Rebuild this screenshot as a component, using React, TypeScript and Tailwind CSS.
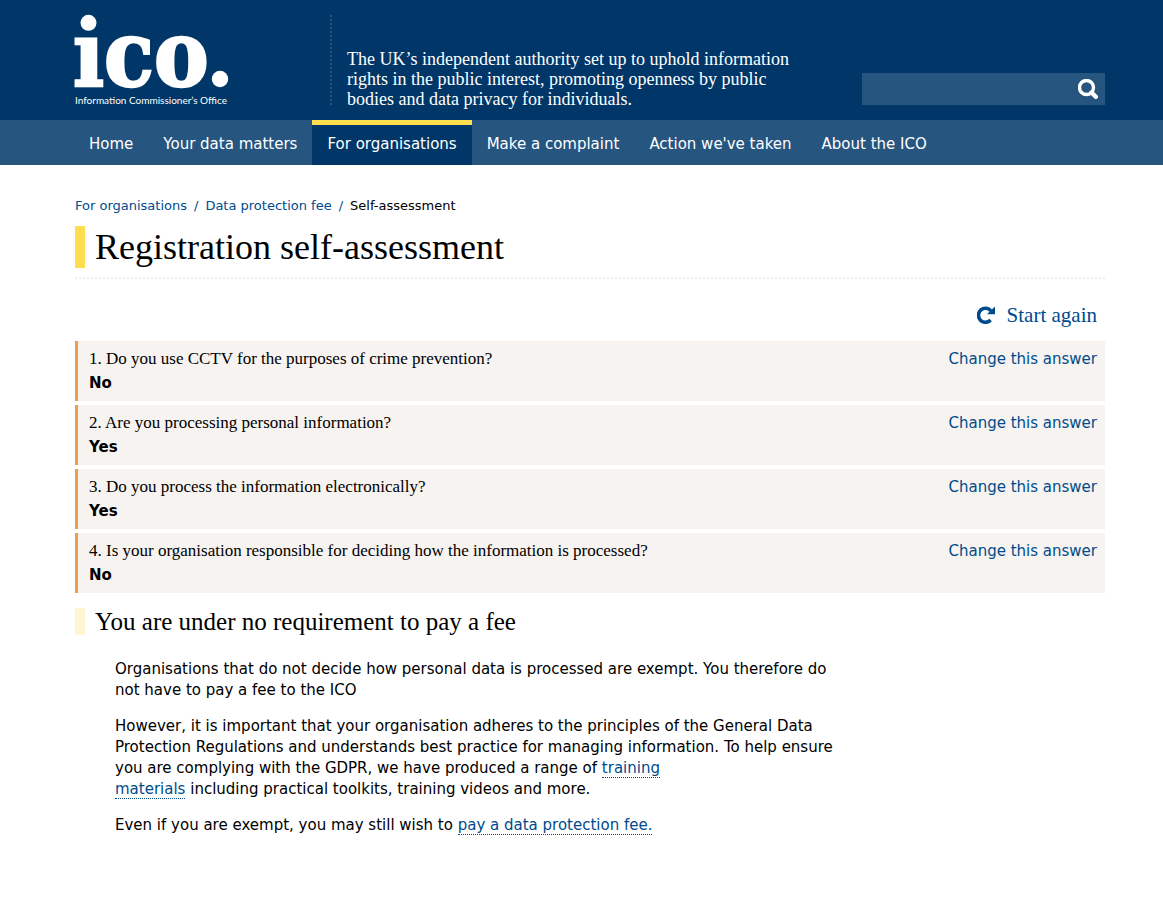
import React from "react";

const navItems = [
  "Home",
  "Your data matters",
  "For organisations",
  "Make a complaint",
  "Action we've taken",
  "About the ICO",
];

const answers = [
  {
    question: "1. Do you use CCTV for the purposes of crime prevention?",
    answer: "No",
  },
  { question: "2. Are you processing personal information?", answer: "Yes" },
  {
    question: "3. Do you process the information electronically?",
    answer: "Yes",
  },
  {
    question:
      "4. Is your organisation responsible for deciding how the information is processed?",
    answer: "No",
  },
];

const Logo = () => (
  <a href="#" className="block w-[259px] shrink-0">
    <svg width="164" height="114" viewBox="-4 0 164 114" fill="#fff">
      {/* dotless i, the round dot is drawn separately */}
      <text
        x="-2"
        y="86"
        fontFamily="'DejaVu Serif Condensed', 'DejaVu Serif', serif"
        fontWeight="bold"
        fontSize="91"
        stroke="#fff"
        strokeWidth="2.4"
      >
        ıco
      </text>
      <circle cx="13.5" cy="22.8" r="8" />
      <circle cx="145" cy="79" r="8.2" />
      <text x="0" y="104" fontFamily="Lato, sans-serif" fontSize="10">
        Information Commissioner’s Office
      </text>
    </svg>
  </a>
);

const SearchIcon = () => (
  <svg width="20" height="20" viewBox="0 0 20 20" fill="none" stroke="#fff">
    <circle cx="8.500" cy="8.500" r="7" strokeWidth="3.4" />
    <path d="M13.500 13.500l4.300 4.300" strokeWidth="4.400" strokeLinecap="round" />
  </svg>
);

const RestartIcon = () => (
  <svg width="18" height="18" viewBox="0 0 18 18" fill="none">
    <path
      d="M13.600 14A7 7 0 1 1 14 5"
      stroke="currentColor"
      strokeWidth="3.6"
    />
    <path d="M18 .5V8.300h-8z" fill="currentColor" />
  </svg>
);

const Header = () => (
  <header className="bg-[#003768] text-white">
    <div className="flex h-[120px] pl-[71px] pr-[58px]">
      <Logo />
      <p className="mt-[15px] h-[90px] max-w-[464px] border-l-2 border-dotted border-[#26557f] pl-[15px] pt-[34px] font-['Liberation_Serif',serif] text-[18px] leading-[20px]">
        The UK’s independent authority set up to uphold information rights in
        the public interest, promoting openness by public bodies and data
        privacy for individuals.
      </p>
      <form className="ml-auto mt-[73px] flex h-8 w-[243px] bg-[#26557f]">
        <input
          type="search"
          aria-label="Search"
          className="min-w-0 flex-1 px-2 outline-none"
        />
        <button type="submit" aria-label="Submit search" className="px-[7px]">
          <SearchIcon />
        </button>
      </form>
    </div>
    <nav className="bg-[#26557f] pl-[74px]">
      <ul className="flex">
        {navItems.map((item) => (
          <li key={item}>
            <a
              href="#"
              className={`block h-[45px] border-t-[5px] px-[15px] text-[15px] leading-[38px] ${
                item === "For organisations"
                  ? "border-[#ffdf4f] bg-[#003768]"
                  : "border-transparent"
              }`}
            >
              {item}
            </a>
          </li>
        ))}
      </ul>
    </nav>
  </header>
);

const App = () => {
  return (
    <div className="min-h-screen bg-white font-['DejaVu_Sans',sans-serif] text-[15px] text-black">
      <Header />
      <main className="pb-[67px] pl-[75px] pr-[58px] pt-[30px]">
        <nav className="flex gap-[7px] text-[13px] leading-[21px] text-[#004b8d]">
          <a href="#">For organisations</a>
          <span>/</span>
          <a href="#">Data protection fee</a>
          <span>/</span>
          <span className="text-black">Self-assessment</span>
        </nav>
        <div className="mt-[10px] border-b-2 border-dotted border-[#eeeeee] pb-[9px]">
          <h1 className="border-l-[10px] border-[#ffdf4f] pl-[10px] font-['Liberation_Serif',serif] text-[36px] leading-[42px]">
            Registration self-assessment
          </h1>
        </div>
        <div className="flex justify-end pb-[14px] pr-2 pt-6">
          <a
            href="#"
            className="flex items-center gap-3 font-['Liberation_Serif',serif] text-[21px] leading-6 text-[#004b8d]"
          >
            <RestartIcon />
            Start again
          </a>
        </div>
        <ol className="flex flex-col gap-1">
          {answers.map(({ question, answer }) => (
            <li
              key={question}
              className="flex min-h-[60px] justify-between border-l-[3px] border-[#ef9f4a] bg-[#f6f3f0] pl-[11px] pr-2 pt-[6px] leading-6"
            >
              <div>
                <p className="font-['Liberation_Serif',serif] text-[17px]">
                  {question}
                </p>
                <p className="font-bold">{answer}</p>
              </div>
              <a href="#" className="text-[#004b8d]">
                Change this answer
              </a>
            </li>
          ))}
        </ol>
        <h2 className="mt-[15px] border-l-[10px] border-[#fff7d3] pl-[10px] font-['Liberation_Serif',serif] text-[25px] leading-[27px]">
          You are under no requirement to pay a fee
        </h2>
        <div className="mt-6 flex max-w-[810px] flex-col gap-[15px] px-10 leading-[21px]">
          <p>
            Organisations that do not decide how personal data is processed are
            exempt. You therefore do not have to pay a fee to the ICO
          </p>
          <p>
            However, it is important that your organisation adheres to the
            principles of the General Data Protection Regulations and
            understands best practice for managing information. To help ensure
            you are complying with the GDPR, we have produced a range of{" "}
            <a
              href="#"
              className="border-b border-dotted border-[#004b8d] text-[#004b8d]"
            >
              training
              <br />
              materials
            </a>{" "}
            including practical toolkits, training videos and more.
          </p>
          <p>
            Even if you are exempt, you may still wish to{" "}
            <a
              href="#"
              className="border-b border-dotted border-[#004b8d] text-[#004b8d]"
            >
              pay a data protection fee.
            </a>
          </p>
        </div>
      </main>
    </div>
  );
};

export default App;
